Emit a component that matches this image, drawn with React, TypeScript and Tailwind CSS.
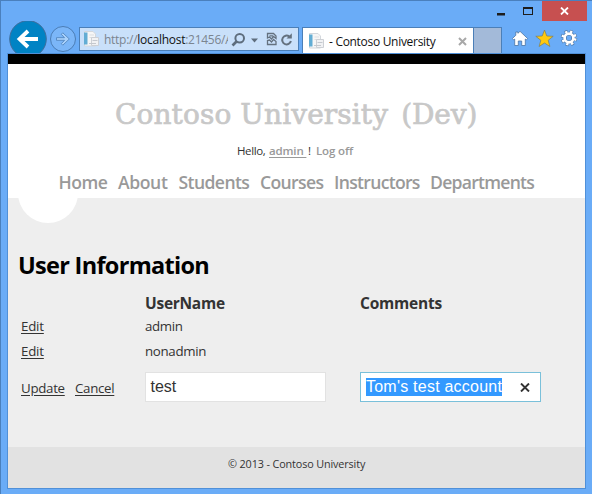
import React from "react";

const NAV = [
  { label: "Home", cls: "w-[59.500px] tracking-[-0.5px]" },
  { label: "About", cls: "w-[60.500px] tracking-[-0.4px]" },
  { label: "Students", cls: "w-[81.500px] tracking-[-0.6px]" },
  { label: "Courses", cls: "w-[74px] tracking-[-0.65px]" },
  { label: "Instructors", cls: "w-[96px] tracking-[-0.7px]" },
  { label: "Departments", cls: "w-[110px] tracking-[-0.75px]" },
];

function PageIcon() {
  return (
    <svg className="h-4 w-4 shrink-0" viewBox="0 0 16 16">
      <path d="M1.500 .5h8.500l2.500 2.500v12h-11z" fill="#f6f6f6" stroke="#d3d7dc" strokeWidth="1" />
      <path d="M1 1.500h3.500v12H1z" fill="#62add4" />
      <path d="M6.500 4h4.500M6.500 6.500h4.500" stroke="#dcdfe3" />
      <path d="M8.500 6.500h7v8h-7z" fill="#f1f2f4" stroke="#cdd0d5" />
      <path d="M9.500 9.500h5M6 12.500h7" stroke="#c4c8ce" />
    </svg>
  );
}

function TitleBar() {
  return (
    <div className="flex h-5 shrink-0 justify-end pr-[5px]">
      <svg className="h-5 w-[46px]" viewBox="0 0 46 20">
        <path d="M1 12h8v2.500H1z" fill="#1d1d1d" />
        <path d="M27 6h10v8H27z M28 8v5h8V8z" fill="#1d1d1d" fillRule="evenodd" />
      </svg>
      <div className="flex h-5 w-[45px] items-center justify-center bg-[#c75050]">
        <svg className="h-2 w-[9px]" viewBox="0 0 9 8">
          <path d="M1 .5l7 7M8 .5l-7 7" stroke="#fff" strokeWidth="1.800" />
        </svg>
      </div>
    </div>
  );
}

function Toolbar() {
  return (
    <div className="flex h-8 shrink-0 items-end overflow-hidden">
      <svg className="ml-[7px] h-[34px] w-[71px] shrink-0 self-start" viewBox="8 20 71 34">
        <circle cx="28" cy="38" r="18.300" fill="#0083c4" stroke="#3f6d9c" strokeWidth="1" />
        <path d="M38 38H20M28 30l-8.500 8 8.500 8" fill="none" stroke="#fff" strokeWidth="3.800" />
        <circle cx="63" cy="38" r="12.500" fill="#7bb6f8" stroke="#4b7db5" strokeWidth="1" />
        <path d="M56.500 36.700h8l-3.200-3.400 1.500-1.500 6.500 6.200-6.500 6.200-1.500-1.500 3.200-3.400h-8z" fill="#a9d1fb" stroke="#4b7fb8" strokeWidth=".8" />
      </svg>
      <div className="mb-[2px] flex h-6 w-[220px] shrink-0 items-center border border-[#4b7fb8] bg-[#c9e0fa] pl-[3px]">
        <PageIcon />
        <div className="mt-0.5 ml-[5px] w-[124px] overflow-hidden whitespace-nowrap font-['Open_Sans',sans-serif] text-[12px] tracking-[-0.270px] text-[#7b8590]">
          http://<span className="text-[#111]">localhost</span>:21456/A
        </div>
        <svg className="h-6 w-[68px] shrink-0" viewBox="228 27 68 24">
          <circle cx="239.700" cy="38.300" r="4.300" fill="none" stroke="#5e6d7d" strokeWidth="2" />
          <path d="M236.500 41.500l-4 4" stroke="#5e6d7d" strokeWidth="2.600" />
          <path d="M251 38.500h7l-3.500 4z" fill="#5e6d7d" />
          <path d="M267.500 38v-4.500h6l2.500 2.500v2.500l-2.500-2-2 2.500-2-2zM269.500 35.800h3.500" fill="none" stroke="#64717f" strokeWidth="1.300" />
          <path d="M267.500 40.500v4h8.500v-3l-2.500-2-2 2.500-2-2z" fill="none" stroke="#64717f" strokeWidth="1.300" />
          <path d="M290.900 41a4.400 4.400 0 1 1-1.700-4.600" fill="none" stroke="#64717f" strokeWidth="2" />
          <path d="M286.500 38.500h5.300v-5.300z" fill="#64717f" />
        </svg>
      </div>
      <div className="ml-[3px] flex h-[26px] w-[172px] shrink-0 items-center border border-b-0 border-[#4b7fb8] bg-white pl-[5px]">
        <PageIcon />
        <span className="mt-0.5 ml-[5px] w-[108px] whitespace-nowrap font-['Open_Sans',sans-serif] text-[12px] tracking-[-0.3px] text-[#111]">
          - Contoso University
        </span>
        <svg className="mt-0.5 ml-[21px] h-[9px] w-[9px]" viewBox="0 0 9 9">
          <path d="M1 1l7 7M8 1L1 8" stroke="#a8a8a8" strokeWidth="2" />
        </svg>
      </div>
      <div className="h-[26px] w-7 shrink-0 border border-b-0 border-l-0 border-[#4b7fb8] bg-[#a3bad9]" />
      <svg className="ml-2.5 h-[26px] w-[68px] shrink-0" viewBox="512 27 68 26">
        <path d="M520 31.300l7.600 7.200-1.300 1.400-1-.9v6.500h-3.600v-4.500h-3.400v4.500h-3.600V39l-1 .9-1.300-1.400 3.400-3.200V32h2.100v1.300z" fill="#fff" stroke="#4a74a3" strokeWidth=".8" />
        <path d="M544.500 30l2.300 6 6.400.3-5 4 1.700 6.200-5.400-3.500-5.400 3.500 1.700-6.200-5-4 6.400-.3z" fill="#ffc90e" stroke="#7f7d58" strokeWidth=".7" />
        <circle cx="569" cy="38" r="6.400" fill="none" stroke="#4a74a3" strokeWidth="3.600" strokeDasharray="2.900 2.126" />
        <circle cx="569" cy="38" r="4.400" fill="none" stroke="#4a74a3" strokeWidth="3.900" />
        <circle cx="569" cy="38" r="6.300" fill="none" stroke="#fff" strokeWidth="2.600" strokeDasharray="2.200 2.748" strokeDashoffset="-.35" />
        <circle cx="569" cy="38" r="4.400" fill="none" stroke="#fff" strokeWidth="2.700" />
      </svg>
    </div>
  );
}

function UserTable() {
  return (
    <div className="grid grid-cols-[124px_215px_190px] pl-[13px] text-[13.300px] text-[#333]">
      <div className="h-[26px]" />
      <div className="text-[15.500px] leading-[26px] font-bold tracking-[-0.270px]">UserName</div>
      <div className="text-[15.500px] leading-[26px] font-bold tracking-[-0.2px]">Comments</div>
      <a className="h-[25px] leading-[20px] tracking-[-0.2px] underline underline-offset-2">Edit</a>
      <span className="leading-[20px] tracking-[-0.350px]">admin</span>
      <span />
      <a className="h-[31px] leading-[20px] tracking-[-0.2px] underline underline-offset-2">Edit</a>
      <span className="leading-[20px] tracking-[-0.320px]">nonadmin</span>
      <span />
      <div className="flex gap-[10px] leading-[32px] tracking-[-0.3px]">
        <a className="w-[44px] underline underline-offset-2">Update</a>
        <a className="underline underline-offset-2">Cancel</a>
      </div>
      <div className="flex h-[30px] w-[181px] items-center border border-[#e2e2e2] bg-white pl-[4.500px] font-['Liberation_Sans',sans-serif] text-[16px] leading-[18px]">
        test
      </div>
      <div className="flex h-[30px] w-[181px] items-center border border-[#7ac0da] bg-white pl-[5px] font-['Liberation_Sans',sans-serif] text-[16px] leading-[18px]">
        <span className="w-[136px] bg-[#3399ff] tracking-[0.230px] whitespace-nowrap text-white">Tom's test account</span>
        <svg className="ml-[18px] h-[9px] w-[10px]" viewBox="0 0 10 9">
          <path d="M1 .500l8 8M9 .500l-8 8" stroke="#333" strokeWidth="1.900" />
        </svg>
      </div>
    </div>
  );
}

export default function App() {
  return (
    <div className="flex h-[494px] w-[592px] flex-col overflow-hidden border-t border-l border-[#4a80bd] bg-[#6aacf7] font-['Open_Sans',sans-serif]">
      <TitleBar />
      <Toolbar />
      <div className="ml-[6px] flex h-[436px] w-[579px] flex-col border border-[#5090d8]">
        <div className="h-2.5 shrink-0 bg-black" />
        <header className="h-[134px] shrink-0 bg-white">
          <h1 className="pt-[33px] pl-[107px] font-['DejaVu_Serif',serif] text-[28px] leading-[36px] tracking-[0.1px] whitespace-nowrap text-[#c8c8c8] [-webkit-text-stroke:0.7px_#c8c8c8]">
            Contoso <span className="pr-[4px]">University</span> <span className="tracking-[-0.1px]">(Dev)</span>
          </h1>
          <div className="mt-[9px] flex pl-[229px] text-[11.500px] leading-[18px] tracking-[-0.150px] whitespace-pre text-[#333]">
            <span className="w-[32px] tracking-[-0.4px]">Hello,</span>
            <a className="w-[37px] font-semibold text-[#999] underline underline-offset-2">{"admin "}</a>
            <span className="w-[10px] pl-[2px]">!</span>
            <a className="font-semibold text-[#999]">Log off</a>
          </div>
          <nav className="mt-[8px] flex pl-[50.500px] text-[17.600px] leading-[28px] font-semibold whitespace-nowrap text-[#999]">
            {NAV.map((n) => (
              <a key={n.label} className={n.cls}>
                {n.label}
              </a>
            ))}
          </nav>
        </header>
        <main className="h-[249px] shrink-0 bg-[#eee]">
          <div className="ml-2.5 flex h-[25px] w-[60px] items-end overflow-hidden">
            <div className="h-[60px] w-[60px] shrink-0 rounded-full bg-white" />
          </div>
          <h2 className="mt-[26px] pl-[10px] text-[23.500px] leading-[32px] font-bold tracking-[-0.7px] text-black">
            User Information
          </h2>
          <div className="mt-[9px]">
            <UserTable />
          </div>
        </main>
        <footer className="flex-1 bg-[#e2e2e2] pt-[8px] pl-[220px] text-[10.800px] leading-[18px] tracking-[-0.120px] text-[#333]">
          © 2013 - Contoso University
        </footer>
      </div>
    </div>
  );
}
